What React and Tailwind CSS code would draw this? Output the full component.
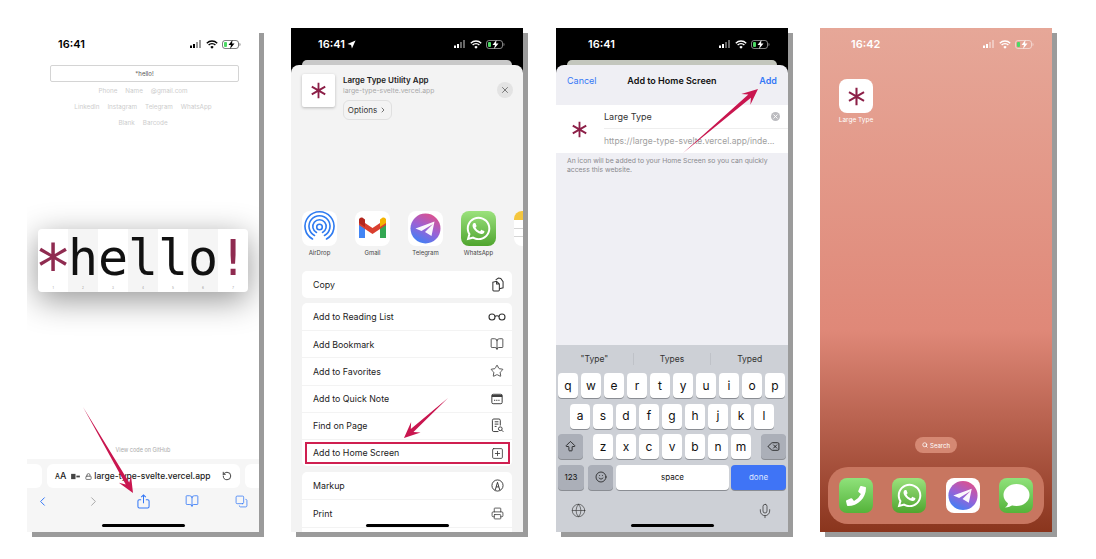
import React from 'react';
import { BookOpen, Star, Search, X, ChevronRight, ChevronLeft, RotateCw, Delete, Smile, Globe, Mic, ArrowBigUp, Lock, Copy, SquarePlus, Printer } from 'lucide-react';
import { FaWhatsapp, FaPhoneAlt } from 'react-icons/fa';

const keysTop = ['q', 'w', 'e', 'r', 't', 'y', 'u', 'i', 'o', 'p'];
const keysMid = ['a', 's', 'd', 'f', 'g', 'h', 'j', 'k', 'l'];
const keysLow = ['z', 'x', 'c', 'v', 'b', 'n', 'm'];

const StatusBar = ({ time, left, color = 'text-white', weak = 'opacity-40', arrow }) => (
  <div className={`flex items-center h-[32px] shrink-0 ${color}`} style={{ paddingLeft: left, paddingRight: 18 }}>
    <span className="text-[11px] font-semibold leading-none">{time}</span>
    {arrow && (
      <svg viewBox="0 0 10 10" className="w-[9px] h-[9px] ml-[2px]" fill="currentColor"><path d="M9.5.5 5.5 9.5 4.5 5.5.5 4.5z" /></svg>
    )}
    <div className="ml-auto flex items-center gap-[3px]">
      <svg viewBox="0 0 12 8" className="w-[12px] h-[8px]" fill="currentColor">
        <rect x="0" y="5.5" width="2" height="2.5" />
        <rect x="3" y="4" width="2" height="4" />
        <rect x="6" y="2" width="2" height="6" className={weak} />
        <rect x="9" y="0" width="2" height="8" className={weak} />
      </svg>
      <svg viewBox="0 0 12 9" className="w-[12px] h-[9px] mx-[1px]" fill="none" stroke="currentColor" strokeWidth="1.4">
        <path d="M.8 3.2a7.4 7.4 0 0 1 10.4 0M2.6 5a4.8 4.8 0 0 1 6.8 0" />
        <path d="M6 8.8 4.3 6.9a2.4 2.4 0 0 1 3.4 0z" fill="currentColor" stroke="none" />
      </svg>
      <svg viewBox="0 0 19 9" className="w-[19px] h-[9px]">
        <rect x=".5" y=".5" width="16" height="8" rx="2.5" fill="none" stroke="currentColor" strokeOpacity=".5" />
        <rect x="2" y="2" width="3" height="5" rx="1" fill="#4cd964" />
        <path d="M17.5 3v3c.8-.2 1-.8 1-1.5s-.2-1.3-1-1.5z" fill="currentColor" fillOpacity=".5" />
        <path d="M10.5 0 6.5 5H9L8 9l4.5-5.500H10z" fill="currentColor" />
      </svg>
    </div>
  </div>
);

const AsteriskLogo = ({ className }) => (
  <svg viewBox="0 0 24 24" className={className} stroke="#8c1f47" strokeWidth="2.6" strokeLinecap="butt">
    <path d="M12 1v22M2.5 6.5l19 11M21.5 6.5l-19 11" />
  </svg>
);

// tapered annotation arrow, drawn from tail to tip
const Arrow = ({ from, to }) => {
  const [x1, y1] = from;
  const [x2, y2] = to;
  const len = Math.hypot(x2 - x1, y2 - y1);
  const ux = (x2 - x1) / len;
  const uy = (y2 - y1) / len;
  const nx = -uy;
  const ny = ux;
  const at = (back, side) => `${x2 - ux * back + nx * side},${y2 - uy * back + ny * side}`;
  const points = [`${x1},${y1}`, at(11, 2), at(16, 7), at(0, 0), at(16, -7), at(11, -2)].join(' ');
  return (
    <svg className="absolute inset-0 w-full h-full pointer-events-none" viewBox="0 0 232 504">
      <polygon points={points} fill="#c9164f" />
    </svg>
  );
};

const Screen = ({ className = '', children }) => (
  <div className={`relative w-[232px] h-[504px] shrink-0 shadow-[5px_5px_0_#9b9b9b] ${className}`}>
    <div className="w-full h-full overflow-hidden flex flex-col">{children}</div>
  </div>
);

const BrowserScreen = () => (
  <Screen className="bg-white">
    <StatusBar time="16:41" left={31} color="text-black" />
    <div className="ml-[23px] mr-[20px] mt-[5px] h-[17px] border border-[#d4d4d4] rounded-[2px] flex items-center justify-center text-[6px] text-[#555]">*hello!</div>
    <div className="flex flex-col items-center gap-[8px] mt-[5px] pr-[-3px] text-[6.3px] leading-[8px] text-[#cdcdcd]">
      <div className="flex gap-[8px]"><span>Phone</span><span>Name</span><span>@gmail.com</span></div>
      <div className="flex gap-[8px]"><span>LinkedIn</span><span>Instagram</span><span>Telegram</span><span>WhatsApp</span></div>
      <div className="flex gap-[8px]"><span>Blank</span><span>Barcode</span></div>
    </div>
    <div className="ml-[11px] mt-[102px] w-[210px] h-[63px] bg-white rounded-[4px] overflow-hidden flex shadow-[0_8px_32px_rgba(0,0,0,0.42)] shrink-0 relative">
      {['*', 'h', 'e', 'l', 'l', 'o', '!'].map((ch, i) => (
        <div key={i} className={`w-[30px] h-full flex flex-col items-center ${i % 2 === 1 ? 'bg-[#f5f5f5]' : ''}`}>
          <div className={`h-[57px] flex items-center justify-center font-['DejaVu_Sans_Mono',monospace] text-[50px] leading-none ${ch === '*' || ch === '!' ? 'text-[#8f2b50]' : 'text-[#111]'}`}>
            <span className={ch === '*' ? 'block translate-y-[10px] scale-125' : ''}>{ch}</span>
          </div>
          <span className="text-[3px] leading-[4px] text-[#999]">{i + 1}</span>
        </div>
      ))}
    </div>
    <div className="flex-1 flex items-end justify-center pb-[5px] text-[5.5px] text-[#aaa]">View code on GitHub</div>
    <div className="h-[73px] shrink-0 bg-[#f6f6f6] flex flex-col">
      <div className="flex gap-[5px] mt-[5px] h-[24px]">
        <div className="w-[15px] bg-white rounded-r-[6px]" />
        <div className="w-[193px] bg-white rounded-[6px] flex items-center px-[8px] text-[#222]">
          <span className="text-[9px] font-medium"><span className="text-[7px]">A</span>A</span>
          <svg viewBox="0 0 10 8" className="w-[9px] h-[7px] ml-[5px]" fill="#444"><rect x="0" y="1" width="5" height="6" /><rect x="6" y="3" width="4" height="2" /></svg>
          <Lock size={7} className="ml-[5px] text-[#666]" strokeWidth={3} />
          <span className="ml-[2px] text-[8.5px] font-medium whitespace-nowrap">large-type-svelte.vercel.app</span>
          <RotateCw size={10} className="ml-auto -scale-x-100" strokeWidth={2} />
        </div>
        <div className="flex-1 bg-white rounded-l-[6px]" />
      </div>
      <div className="flex justify-between items-center pl-[8px] pr-[11px] mt-[4px] h-[18px]">
        <ChevronLeft size={15} className="text-[#3478f6]" strokeWidth={1.6} />
        <ChevronRight size={15} className="text-[#a9a9a9]" strokeWidth={1.6} />
        <svg viewBox="0 0 14 16" className="w-[13px] h-[15px]" fill="none" stroke="#3478f6" strokeWidth="1.1">
          <path d="M4.5 6H2.5A1.5 1.5 0 0 0 1 7.5v6A1.5 1.5 0 0 0 2.5 15h9a1.5 1.5 0 0 0 1.5-1.5v-6A1.5 1.5 0 0 0 11.5 6H9.500M7 10V1M4.500 3.300 7 1l2.500 2.300" />
        </svg>
        <BookOpen size={14} className="text-[#3478f6]" strokeWidth={1.4} />
        <Copy size={13} className="text-[#3478f6] -scale-x-100 -scale-y-100" strokeWidth={1.4} />
      </div>
      <div className="mt-auto mb-[5px] mx-auto w-[83px] h-[3px] rounded-full bg-black" />
    </div>
    <Arrow from={[56, 379]} to={[106, 465]} />
  </Screen>
);

const AirDropIcon = () => (
  <svg viewBox="0 0 35 35" className="w-full h-full" fill="none" stroke="#2f7bf0" strokeWidth="1.6" strokeLinecap="round">
    <path d="M10.5 28a14.500 14.500 0 1 1 14 0M12.500 24.500a10.500 10.500 0 1 1 10 0M14.500 21.500a6.700 6.700 0 1 1 6 0" />
    <circle cx="17.5" cy="16" r="2.800" />
  </svg>
);

const GmailIcon = () => (
  <svg viewBox="0 0 35 35" className="w-full h-full">
    <path d="M4 11v16h6V14z" fill="#4285f4" />
    <path d="M25 14v13h6V11z" fill="#34a853" />
    <path d="M4 8 17.500 17 31 8v6L17.500 23 4 14z" fill="#d93f2f" />
    <path d="M4 9c0-2 2-3 4-2l2 1.500V16L4 12z" fill="#b3261e" />
    <path d="M25 8.500 27 7c2-1 4 0 4 2v3l-6 4z" fill="#f4b400" />
  </svg>
);

const TelegramIcon = ({ id }) => (
  <div className="w-full h-full bg-white flex items-center justify-center">
    <svg viewBox="0 0 35 35" className="w-full h-full">
      <defs>
        <linearGradient id={id} x1="0.75" y1="0" x2="0.25" y2="1">
          <stop offset="0" stopColor="#e0508a" />
          <stop offset="0.5" stopColor="#9a62d6" />
          <stop offset="1" stopColor="#3a82f7" />
        </linearGradient>
      </defs>
      <circle cx="17.5" cy="17.5" r="15" fill={`url(#${id})`} />
      <path d="M7.500 17.500 26.500 10.500 23.500 25 17 21 25 13 13.500 20z" fill="white" opacity=".95" />
    </svg>
  </div>
);

const WhatsAppIcon = () => (
  <div className="w-full h-full bg-gradient-to-b from-[#9be27c] to-[#4fa52d] flex items-center justify-center text-white">
    <FaWhatsapp size={27} />
  </div>
);

const NotesIcon = () => (
  <div className="w-full h-full bg-white flex flex-col">
    <div className="h-[9px] bg-[#f4c63e]" />
    <div className="h-[9px] border-b border-[#d5d5d5]" />
    <div className="h-[8px] border-b border-[#d5d5d5]" />
  </div>
);

const shareApps = [
  { name: 'AirDrop', icon: <AirDropIcon /> },
  { name: 'Gmail', icon: <GmailIcon /> },
  { name: 'Telegram', icon: <TelegramIcon id="tg-share" /> },
  { name: 'WhatsApp', icon: <WhatsAppIcon /> },
  { name: 'Notes', icon: <NotesIcon /> },
];

const GlassesIcon = () => (
  <svg viewBox="0 0 18 8" className="w-[18px] h-[8px]" fill="none" stroke="#333" strokeWidth="1.100">
    <circle cx="4" cy="4" r="3" />
    <circle cx="14" cy="4" r="3" />
    <path d="M7 3.500c1-.8 3-.8 4 0" />
  </svg>
);

const CopyDocsIcon = () => (
  <svg viewBox="0 0 14 16" className="w-[13px] h-[15px]" fill="none" stroke="#333" strokeWidth="1.100">
    <path d="M2 5.500 6 4.500l3 3V14a1 1 0 0 1-1 1H3a1 1 0 0 1-1-1zM6 4.500V7.500h3" />
    <path d="M5 3 8 1l2.500.5L13 5v6.500l-4 1" />
  </svg>
);

const QuickNoteIcon = () => (
  <svg viewBox="0 0 14 14" className="w-[12px] h-[12px]" fill="none" stroke="#333" strokeWidth="1.100">
    <rect x="1" y="1.500" width="12" height="11" rx="1.500" />
    <path d="M1 3.500h12" strokeWidth="2.200" />
    <path d="M3.500 8.500h7" strokeDasharray="1.500 1" />
  </svg>
);

const FindIcon = () => (
  <svg viewBox="0 0 14 16" className="w-[13px] h-[15px]" fill="none" stroke="#333" strokeWidth="1">
    <path d="M8 14.500H3A1.500 1.500 0 0 1 1.500 13V2.500A1.500 1.500 0 0 1 3 1h5.500A1.500 1.500 0 0 1 10 2.500V8M4 4h4M4 6.500h4M4 9h2" />
    <circle cx="10" cy="11.500" r="2" />
    <path d="M11.500 13l1.800 1.800" />
  </svg>
);

const MarkupIcon = () => (
  <svg viewBox="0 0 14 14" className="w-[13px] h-[13px]" fill="none" stroke="#333" strokeWidth="1">
    <circle cx="7" cy="7" r="6" />
    <path d="M4.500 12 7 3.500 9.500 12M5.500 8.500h3" />
  </svg>
);

const ActionRow = ({ label, icon, first }) => (
  <div className={`h-[27.2px] flex items-center justify-between pl-[11px] pr-[5px] text-[8.8px] text-[#222] ${first ? '' : 'border-t border-[#f3f3f3]'}`}>
    <span>{label}</span>
    <span className="w-[20px] flex justify-center text-[#333]">{icon}</span>
  </div>
);

const actionGroup = [
  { label: 'Add to Reading List', icon: <GlassesIcon /> },
  { label: 'Add Bookmark', icon: <BookOpen size={14} strokeWidth={1.4} /> },
  { label: 'Add to Favorites', icon: <Star size={14} strokeWidth={1.4} /> },
  { label: 'Add to Quick Note', icon: <QuickNoteIcon /> },
  { label: 'Find on Page', icon: <FindIcon /> },
  { label: 'Add to Home Screen', icon: <SquarePlus size={13} strokeWidth={1.5} /> },
];

const ShareScreen = () => (
  <Screen className="bg-black">
    <StatusBar time="16:41" left={27} arrow />
    <div className="mx-[11px] h-[5px] bg-[#c8c8c8] rounded-t-[8px] shrink-0" />
    <div className="flex-1 bg-[#f3f3f3] rounded-t-[8px] overflow-hidden px-[11px] relative min-h-0">
      <div className="flex pt-[9px] h-[62px] relative">
        <div className="w-[33px] h-[33px] bg-white rounded-[2px] shadow-[0_1px_3px_rgba(0,0,0,0.25)] flex items-center justify-center">
          <AsteriskLogo className="w-[17px] h-[17px]" />
        </div>
        <div className="ml-[8px]">
          <div className="text-[8px] leading-[11px] mt-[1px] font-semibold text-[#222]">Large Type Utility App</div>
          <div className="text-[6.8px] leading-[10px] text-[#aaa]">large-type-svelte.vercel.app</div>
          <div className="mt-[4px] w-[49px] h-[20px] rounded-[6px] border border-[#e0e0e0] flex items-center justify-center gap-[2px] text-[8px] text-[#333]">
            Options <ChevronRight size={8} />
          </div>
        </div>
        <div className="ml-auto w-[16px] h-[16px] mt-[8px] -mr-[1px] rounded-full bg-[#e3e3e3] flex items-center justify-center text-[#555]">
          <X size={10} strokeWidth={1.8} />
        </div>
      </div>
      <div className="flex gap-[18px] mt-[84px] h-[60px]">
        {shareApps.map((app) => (
          <div key={app.name} className="w-[35px] shrink-0 flex flex-col items-center">
            <div className="w-[35px] h-[35px] rounded-[8px] bg-white overflow-hidden shrink-0">{app.icon}</div>
            <span className="mt-[3px] text-[6px] leading-[8px] text-[#444] whitespace-nowrap">{app.name}</span>
          </div>
        ))}
      </div>
      <div className="bg-white rounded-[5px] h-[27px] flex items-center justify-between pl-[11px] pr-[5px] text-[8.8px] text-[#222]">
        <span>Copy</span>
        <span className="w-[20px] flex justify-center"><CopyDocsIcon /></span>
      </div>
      <div className="bg-white rounded-[5px] mt-[5px]">
        {actionGroup.map((row, i) => (
          <ActionRow key={row.label} {...row} first={i === 0} />
        ))}
      </div>
      <div className="bg-white rounded-t-[5px] mt-[6px]">
        <ActionRow first label="Markup" icon={<MarkupIcon />} />
        <ActionRow label="Print" icon={<Printer size={13} strokeWidth={1.4} />} />
        <div className="h-[10px] border-t border-[#f3f3f3]" />
      </div>
      <div className="absolute bottom-[5px] left-[75px] w-[83px] h-[3px] rounded-full bg-black" />
    </div>
    <div className="absolute left-[14px] top-[414px] w-[205px] h-[22px] border-[2px] border-[#cf1f50]" />
    <Arrow from={[157, 370]} to={[113, 410]} />
  </Screen>
);

const Key = ({ children, className = 'w-[20px] bg-white', text = 'text-[12px]' }) => (
  <div className={`h-[25px] rounded-[4px] shadow-[0_1px_0_#8a8d93] flex items-center justify-center shrink-0 text-[#111] ${text} ${className}`}>
    {children}
  </div>
);

const AddScreen = () => (
  <Screen className="bg-black ml-px">
    <StatusBar time="16:41" left={32} />
    <div className="mx-[11px] h-[5px] bg-[#c3c6bd] rounded-t-[8px] shrink-0" />
    <div className="flex-1 min-h-0 bg-[#efeff4] rounded-t-[8px] overflow-hidden flex flex-col relative">
      <div className="h-[40px] shrink-0 grid grid-cols-[1fr_auto_1fr] items-center px-[11px] pb-[8px] text-[9px]">
        <span className="text-[#3478f6]">Cancel</span>
        <span className="font-semibold text-[#111]">Add to Home Screen</span>
        <span className="font-semibold text-[#3478f6] text-right">Add</span>
      </div>
      <div className="h-[48px] shrink-0 bg-white flex">
        <div className="w-[48px] flex items-center justify-center pr-[1px]">
          <AsteriskLogo className="w-[17px] h-[17px]" />
        </div>
        <div className="flex-1 flex flex-col">
          <div className="h-[24px] flex items-center justify-between pr-[8px] text-[9px] text-[#333] border-b border-[#eeeeee]">
            <span>Large Type</span>
            <span className="w-[9px] h-[9px] rounded-full bg-[#bcbcc0] flex items-center justify-center text-white"><X size={7} strokeWidth={3} /></span>
          </div>
          <div className="flex-1 flex items-center text-[8.5px] text-[#a0a0a0] whitespace-nowrap overflow-hidden">https://large-type-svelte.vercel.app/inde...</div>
        </div>
      </div>
      <p className="px-[11px] pt-[3px] text-[6.8px] leading-[9px] text-[#8a8a8e]">An icon will be added to your Home Screen so you can quickly access this website.</p>
      <div className="mt-auto h-[187px] shrink-0 bg-[#cdd0d6] flex flex-col">
        <div className="h-[28px] flex items-center text-[8.5px] text-[#333]">
          <span className="flex-1 text-center border-r border-[#bfc2c8]">"Type"</span>
          <span className="flex-1 text-center border-r border-[#bfc2c8]">Types</span>
          <span className="flex-1 text-center">Typed</span>
        </div>
        <div className="flex flex-col gap-[5.5px] px-[2px]">
          <div className="flex gap-[3px]">{keysTop.map((k) => <Key key={k}>{k}</Key>)}</div>
          <div className="flex gap-[3px] justify-center">{keysMid.map((k) => <Key key={k}>{k}</Key>)}</div>
          <div className="flex justify-between">
            <Key className="w-[25px] bg-[#abafb8]"><ArrowBigUp size={13} strokeWidth={1.5} /></Key>
            <div className="flex gap-[3px]">{keysLow.map((k) => <Key key={k}>{k}</Key>)}</div>
            <Key className="w-[25px] bg-[#abafb8]"><Delete size={13} strokeWidth={1.5} /></Key>
          </div>
          <div className="flex gap-[3px]">
            <Key className="w-[26px] mr-px bg-[#abafb8]" text="text-[8px]">123</Key>
            <Key className="w-[25px] bg-[#abafb8]"><Smile size={12} strokeWidth={1.5} /></Key>
            <Key className="w-[113px] bg-white" text="text-[8px]">space</Key>
            <Key className="w-[55px] -ml-px bg-[#3f74f6] !text-[#dfe7ff]" text="text-[8px]">done</Key>
          </div>
        </div>
        <div className="flex justify-between items-center px-[15px] mt-[13px]">
          <Globe size={15} strokeWidth={1} className="text-[#333]" />
          <Mic size={16} strokeWidth={1.1} className="text-[#333]" />
        </div>
        <div className="mt-auto mb-[5px] mx-auto w-[83px] h-[3px] rounded-full bg-black" />
      </div>
    </div>
    <Arrow from={[127, 125]} to={[202, 61]} />
  </Screen>
);

const DockIcon = ({ className, children }) => (
  <div className={`w-[34px] h-[35px] rounded-[8px] overflow-hidden flex items-center justify-center text-white shrink-0 ${className}`}>
    {children}
  </div>
);

const HomeScreen = () => (
  <Screen className="bg-gradient-to-b from-[#e6a798] via-[#df8878] via-60% to-[#8a351d]">
    <StatusBar time="16:42" left={31} />
    <div className="ml-[19px] mt-[19px] w-[34px] flex flex-col items-center">
      <div className="w-[34px] h-[34px] rounded-[8px] bg-white flex items-center justify-center shrink-0">
        <AsteriskLogo className="w-[19px] h-[19px]" />
      </div>
      <span className="mt-[3px] text-[6.5px] leading-[8px] text-white whitespace-nowrap">Large Type</span>
    </div>
    <div className="flex-1" />
    <div className="mx-auto w-[42px] h-[16px] rounded-full bg-[#d58873] flex items-center justify-center gap-[2px] text-[6px] text-white">
      <Search size={6} strokeWidth={3} />Search
    </div>
    <div className="mx-[8px] mt-[14px] mb-[8px] h-[57px] rounded-[20px] bg-[#c87660] flex items-center justify-between px-[11px] shrink-0">
      <DockIcon className="bg-gradient-to-b from-[#8fe27a] to-[#54b339]"><FaPhoneAlt size={20} className="-scale-x-100" /></DockIcon>
      <DockIcon className="bg-gradient-to-b from-[#9be27c] to-[#4fa52d]"><FaWhatsapp size={27} /></DockIcon>
      <DockIcon><TelegramIcon id="tg-dock" /></DockIcon>
      <DockIcon className="bg-gradient-to-b from-[#8fe27a] to-[#54b339]">
        <svg viewBox="0 0 34 34" className="w-full h-full" fill="white">
          <ellipse cx="17.5" cy="16.5" rx="13" ry="11" />
          <path d="M9 24c0 2-1 4-3 5 3 0 6-1 8-3z" />
        </svg>
      </DockIcon>
    </div>
  </Screen>
);

export default function App() {
  return (
    <div className="w-[1096px] h-[559px] overflow-hidden bg-white pt-[28px] pl-[27px] flex gap-[32px] font-['Inter',sans-serif]">
      <BrowserScreen />
      <ShareScreen />
      <AddScreen />
      <HomeScreen />
    </div>
  );
}
